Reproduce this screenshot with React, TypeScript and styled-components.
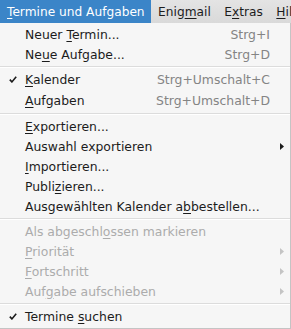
import React from "react";
import styled, { createGlobalStyle } from "styled-components";

const GlobalStyle = createGlobalStyle`
  html, body {
    margin: 0;
    padding: 0;
    background: #f6f6f6;
  }
  body {
    font-family: "DejaVu Sans", "Liberation Sans", sans-serif;
    font-size: 12.4px;
    color: #1c1c1c;
  }
`;

const Window = styled.div`
  width: 291px;
  height: 329px;
  overflow: hidden;
  display: flex;
  flex-direction: column;
`;

const MenuBar = styled.div`
  display: flex;
  height: 23px;
  background: linear-gradient(#e4e4e4, #d9d9d9);
  font-size: 12.2px;
  white-space: nowrap;
  overflow: hidden;
`;

const BarItem = styled.div<{ $active?: boolean }>`
  display: flex;
  align-items: center;
  flex-shrink: 0;
  padding: 0 6.5px 0 7px;
  height: 23px;
  background: ${(p) => (p.$active ? "#3b85c8" : "transparent")};
  color: ${(p) => (p.$active ? "#ffffff" : "#1c1c1c")};
`;

const Key = styled.span`
  text-decoration: underline;
  text-underline-offset: 2px;
`;

const Menu = styled.div`
  flex: 1;
  display: flex;
  flex-direction: column;
  padding: 1px 0 2px;
  background: #f6f6f6;
  border-right: 1px solid #c4c4c4;
  border-bottom: 1px solid #c4c4c4;
`;

const Item = styled.div<{ $tall?: boolean; $disabled?: boolean }>`
  display: grid;
  grid-template-columns: 25px 1fr auto 20px;
  align-items: center;
  height: ${(p) => (p.$tall ? 21 : 20)}px;
  color: ${(p) => (p.$disabled ? "#acacac" : "#1c1c1c")};
  white-space: nowrap;
`;

const CheckSlot = styled.div`
  display: flex;
  justify-content: flex-end;
  padding-right: 8px;
`;

const Shortcut = styled.span`
  color: #848484;
  text-align: right;
`;

const ArrowSlot = styled.div`
  display: flex;
  justify-content: flex-start;
  padding-left: 10px;
`;

const Separator = styled.div`
  height: 1px;
  margin: 2px 0;
  background: #dcdcdc;
  box-shadow: 0 1px 0 #ffffff;
`;

const Check = () => (
  <svg width="8" height="7" viewBox="0 0 8 7">
    <path d="M0.8 3.6 L2.9 5.9 L7.2 0.8" fill="none" stroke="#1c1c1c" strokeWidth="1.6" />
  </svg>
);

const Arrow = ({ color }: { color: string }) => (
  <svg width="4" height="7" viewBox="0 0 4 7">
    <path d="M0 0 L4 3.5 L0 7 Z" fill={color} />
  </svg>
);

type Entry = {
  pre: string;
  key?: string;
  post?: string;
  shortcut?: string;
  checked?: boolean;
  submenu?: boolean;
  disabled?: boolean;
  tall?: boolean;
};

const MenuItem = ({ e }: { e: Entry }) => (
  <Item $tall={e.tall} $disabled={e.disabled}>
    <CheckSlot>{e.checked && <Check />}</CheckSlot>
    <span>
      {e.pre}
      {e.key && <Key>{e.key}</Key>}
      {e.post}
    </span>
    <Shortcut>{e.shortcut}</Shortcut>
    <ArrowSlot>{e.submenu && <Arrow color={e.disabled ? "#c4c4c4" : "#1c1c1c"} />}</ArrowSlot>
  </Item>
);

const groups: Entry[][] = [
  [
    { pre: "Neuer ", key: "T", post: "ermin...", shortcut: "Strg+I" },
    { pre: "Ne", key: "u", post: "e Aufgabe...", shortcut: "Strg+D" },
  ],
  [
    { pre: "", key: "K", post: "alender", shortcut: "Strg+Umschalt+C", checked: true, tall: true },
    { pre: "", key: "A", post: "ufgaben", shortcut: "Strg+Umschalt+D", tall: true },
  ],
  [
    { pre: "", key: "E", post: "xportieren..." },
    { pre: "Auswahl exportieren", submenu: true },
    { pre: "", key: "I", post: "mportieren..." },
    { pre: "Publi", key: "z", post: "ieren..." },
    { pre: "Ausgewählten Kalender a", key: "b", post: "bestellen..." },
  ],
  [
    { pre: "Als abgeschl", key: "o", post: "ssen markieren", disabled: true },
    { pre: "", key: "P", post: "riorität", disabled: true, submenu: true },
    { pre: "", key: "F", post: "ortschritt", disabled: true, submenu: true },
    { pre: "Auf", key: "g", post: "abe aufschieben", disabled: true, submenu: true },
  ],
  [{ pre: "Termine ", key: "s", post: "uchen", checked: true }],
];

export default function App() {
  return (
    <Window>
      <GlobalStyle />
      <MenuBar>
        <BarItem $active>
          <span>
            <Key>T</Key>ermine und Aufgaben
          </span>
        </BarItem>
        <BarItem>
          <span>
            Enig<Key>m</Key>ail
          </span>
        </BarItem>
        <BarItem>
          <span>
            E<Key>x</Key>tras
          </span>
        </BarItem>
        <BarItem>
          <span>
            <Key>H</Key>ilfe
          </span>
        </BarItem>
      </MenuBar>
      <Menu>
        {groups.map((g, i) => (
          <React.Fragment key={i}>
            {i > 0 && <Separator />}
            {g.map((e, j) => (
              <MenuItem key={j} e={e} />
            ))}
          </React.Fragment>
        ))}
      </Menu>
    </Window>
  );
}
